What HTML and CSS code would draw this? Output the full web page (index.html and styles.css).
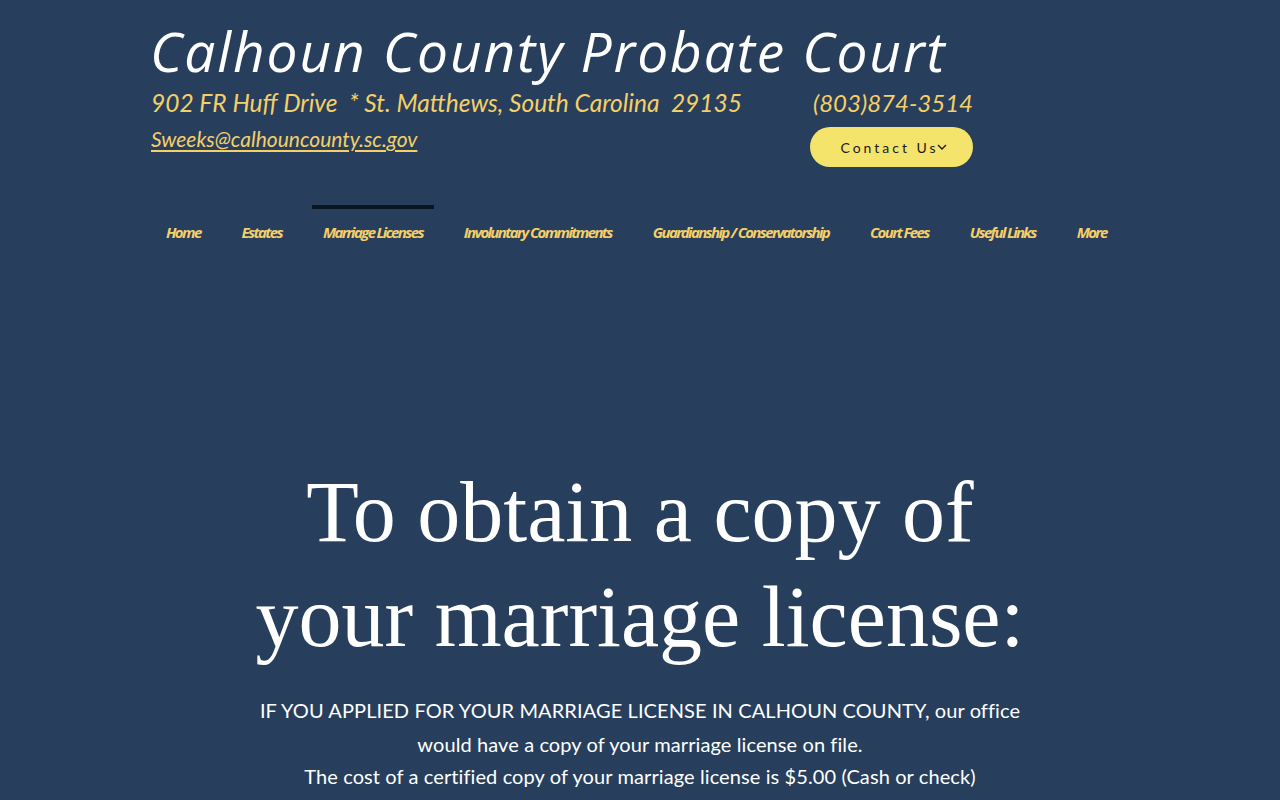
FILE: index.html
```html
<!DOCTYPE html>
<html lang="en">
<head>
<meta charset="utf-8">
<title>Marriage Licenses | Calhoun County Probate Court</title>
<link rel="stylesheet" href="styles.css">
</head>
<body>
<header class="header">
  <div class="header-inner">
    <h1 class="site-title">Calhoun County Probate Court</h1>
    <div class="info-row">
      <p class="address">902 FR Huff Drive &nbsp;* St. Matthews, South Carolina &nbsp;29135</p>
      <p class="phone">(803)874-3514</p>
    </div>
    <div class="info-row second">
      <a class="email" href="#">Sweeks@calhouncounty.sc.gov</a>
      <a class="contact-btn" href="#">Contact Us<svg class="chev" viewBox="0 0 10 6" width="10" height="6"><path d="M1 1l4 4 4-4" fill="none" stroke="#1a1a1a" stroke-width="1.4"/></svg></a>
    </div>
  </div>
  <nav class="nav">
    <a href="#">Home</a>
    <a href="#">Estates</a>
    <a href="#" class="active">Marriage Licenses</a>
    <a href="#">Involuntary Commitments</a>
    <a href="#">Guardianship / Conservatorship</a>
    <a href="#">Court Fees</a>
    <a href="#">Useful Links</a>
    <a href="#">More</a>
  </nav>
</header>
<main class="main">
  <h2 class="headline">To obtain a copy of<br>your marriage license:</h2>
  <p class="body-text">IF YOU APPLIED FOR YOUR MARRIAGE LICENSE IN CALHOUN COUNTY, our office<br>would have a copy of your marriage license on file.</p>
  <p class="body-text tight">The cost of a certified copy of your marriage license is $5.00 (Cash or check)</p>
</main>
</body>
</html>
```
FILE: styles.css
```css
html, body {
  margin: 0;
  padding: 0;
  background: #273f5c;
  height: 800px;
  overflow: hidden;
}
body {
  font-family: "Open Sans", sans-serif;
  color: #ffffff;
}
.header {
  width: 100%;
}
.header-inner {
  width: 823px;
  margin-left: 150px;
  padding-top: 20px;
}
.site-title {
  margin: 0;
  font-family: "Open Sans", sans-serif;
  font-style: italic;
  font-weight: 400;
  font-size: 55px;
  line-height: 62px;
  color: #ffffff;
  letter-spacing: 1.9px;
  white-space: nowrap;
}
.info-row {
  display: flex;
  justify-content: space-between;
  align-items: center;
}
.address, .phone {
  margin: 0;
  font-family: "Lato", sans-serif;
  font-style: italic;
  font-size: 24.5px;
  line-height: 30px;
  color: #f5cf68;
}
.address {
  padding-left: 1px;
  padding-top: 6px;
}
.phone {
  padding-top: 6px;
  font-size: 24px;
}
.second {
  align-items: flex-start;
  margin-top: 8px;
}
.email {
  font-family: "Lato", sans-serif;
  font-style: italic;
  font-size: 21px;
  line-height: 26px;
  color: #f5cf68;
  text-decoration: underline;
  text-underline-offset: 3px;
  padding-left: 1px;
}
.contact-btn {
  margin-top: 1px;
  width: 163px;
  height: 40px;
  box-sizing: border-box;
  border-radius: 20px;
  background: #f5e46b;
  color: #1a1a1a;
  text-decoration: none;
  font-family: "Lato", sans-serif;
  font-size: 14px;
  letter-spacing: 3px;
  display: flex;
  align-items: center;
  justify-content: center;
  padding-left: 4px;
}
.chev {
  margin-left: -2px;
}
.nav {
  display: flex;
  gap: 19px;
  margin-left: 155px;
  margin-top: 38px;
  height: 56px;
}
.nav a {
  position: relative;
  display: block;
  white-space: nowrap;
  padding: 0 11px;
  font-family: "Open Sans", sans-serif;
  font-style: italic;
  font-weight: 700;
  font-size: 15px;
  letter-spacing: -1.65px;
  line-height: 54px;
  color: #f5cf68;
  text-decoration: none;
}
.nav a.active::before {
  content: "";
  position: absolute;
  left: 0;
  right: 0;
  top: 0;
  height: 4px;
  background: #0b1526;
}
.main {
  text-align: center;
  padding-top: 199px;
}
.headline {
  margin: 0;
  font-family: "Liberation Serif", serif;
  font-weight: 400;
  font-size: 86px;
  line-height: 105px;
  color: #ffffff;
}
.body-text {
  margin: 23px 0 0;
  font-family: "Lato", sans-serif;
  font-size: 20px;
  letter-spacing: 0.1px;
  line-height: 34px;
  color: #ffffff;
}
.body-text.tight {
  margin-top: -2px;
}
```
